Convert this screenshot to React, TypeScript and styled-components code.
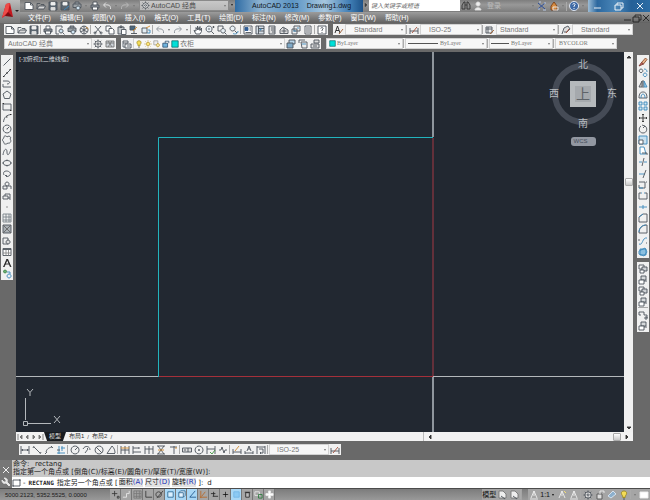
import React from "react";
import styled, { createGlobalStyle } from "styled-components";

const K = "#4d545b";
const B = "#3b88bb";
const O = "#d08a2c";
const L = "#e8e8e8";

type Stroke = [d: string, stroke?: string, fill?: string];

/* Every glyph is drawn on a 10 x 10 grid. */
const glyphs: Record<string, Stroke[]> = {
  new: [["M1 1.5H6.5L9 4V8.5H1Z", K, "#fff"], ["M6.5 1.5V4H9", K]],
  open: [["M1 8V2.5H4L5 3.5H8V5", K], ["M1 8L3 5H9.5L8 8Z", K, "#d8d8d8"]],
  save: [["M1 1H9V9H1Z", K, "#5c6670"], ["M3 1.5H7V4H3Z", "#eee", "#eee"], ["M3 6.5H7V9H3Z", "#ddd", "#ddd"]],
  saveas: [["M1 1H9V9H1Z", K, "#5c6670"], ["M3 1.5H7V4H3Z", "#eee", "#eee"], ["M4 9L9 5", B]],
  print: [["M3 4V1H7V4", K, "#fff"], ["M1 4H9V7H1Z", K, "#8b9198"], ["M2.5 6H7.5V9H2.5Z", K, "#fff"]],
  preview: [["M7 3V1H1V9H4", K], ["M6 4a2 2 0 1 0 .1 0M7.5 7.5L9.5 9.5", K, "#cfe3f0"]],
  publish: [["M3 3V1H7V3M1 3H9V6.5H1Z", K, "#9aa0a5"], ["M6 5a2 2 0 1 0 .1 0", K, "#cfe3f0"]],
  globe: [["M5 1a4 4 0 1 0 .1 0", K, "#e5e5e5"], ["M5 1V9M2 3L8 7M8 3L2 7", K], ["M7 2L9.5 4", O]],
  cut: [["M2 1L8 8M8 1L2 8", K], ["M2 7a1 1 0 1 0 .1 0M8 7a1 1 0 1 0 .1 0", K]],
  copy: [["M1 1H5L6 2V6H1Z", K, "#fff"], ["M4 3.5H7.5L9 5V9H4Z", K, "#fff"]],
  paste: [["M1 2H7V9H1Z", K, "#c4c8cc"], ["M3 1H5V2.5H3Z", K], ["M4.5 4.5H9V9.5H4.5Z", K, "#fff"]],
  match: [["M1 1H6V5H1Z", K, "#4b6880"], ["M4 6L8 2", O], ["M2 8.5H8M5 6V9", K]],
  block: [["M1 3H6V8H1Z", K, "#e4eef5"], ["M6 8H9V5H7", B], ["M5 3L9 1", O]],
  undo: [["M8.5 8C9 4 6 3.5 2 4", "#8a9097"], ["M4 1.5L1.5 4L4 6.5", "#8a9097"]],
  redo: [["M1.5 8C1 4 4 3.5 8 4", "#8a9097"], ["M6 1.5L8.5 4L6 6.5", "#8a9097"]],
  undoL: [["M8.5 8C9 4 6 3.5 2 4", L], ["M4 1.5L1.5 4L4 6.5", L]],
  redoL: [["M1.5 8C1 4 4 3.5 8 4", "#bbb"], ["M6 1.5L8.5 4L6 6.5", "#bbb"]],
  pan: [["M3 9L1 5.5L3 6V2.5L4.5 5V1L6 5L7 1.5V5.5L8.5 3V6.5L7 9Z", K, "#fff"]],
  zoom: [["M4 1a3 3 0 1 0 .1 0M6.2 6.2L9 9", K, "#e9f0f5"], ["M3 4H5M7.5 2H9.5M8.5 1V3", K]],
  zoomw: [["M1 1H6V3M1 1V6H3", K], ["M6 3.5a2.3 2.3 0 1 0 .1 0M7.7 7.7L9.5 9.5", K, "#e9f0f5"]],
  zoomp: [["M3.5 1a2.5 2.5 0 1 0 .1 0M5.5 5.5L8 8", K, "#e9f0f5"], ["M9 6C9 9 6 9.5 4 8.5", B]],
  props: [["M1 1H9V9H1Z", K, "#fff"], ["M2 2.5H5V5.5H2Z", "#315d95", "#315d95"], ["M6.5 3H8M6.5 5H8M2.5 7.5H8", K]],
  design: [["M1 1H9V9H1ZM3.5 1V9M3.5 3.5H9M3.5 6H9", K, "#d5dde4"], ["M5 4H6V5H5Z", B]],
  palette: [["M2 1H8V9H2Z", K, "#ddd"], ["M4 3H8M4 5H8M5 7H8", K]],
  sheet: [["M1 5L4 2L9 5V8.5H1Z", K, "#ddd"], ["M2.5 6H7.5M5 3V8", K]],
  markup: [["M3 1H9V6H3ZM1 4H6V9H1Z", K, "#eee"], ["M2 6H5M6 3H8", B]],
  calc: [["M2 1H8V9H2Z", K, "#fff"], ["M3 3H7M3 5H7M3 7H7", K]],
  help: [["M1 1H9V9H1Z", K, "#fff"], ["M3.7 3.5C4 2 6.8 2.5 6 4L5 5V6M5 7V8", K]],
  textstyle: [["M1 8L3.5 1L6 8M2 5.5H5", "#222"], ["M5 9L9 4", "#99582c"]],
  dimstyle: [["M1 3V9M9 3V9M1 6H9", K], ["M3 8L8 2", "#a54d37"]],
  tablestyle: [["M1 2H7V8H1ZM1 4H7M3 2V8", K, "#eee"], ["M5 9L9 5", "#a5602d"]],
  leader: [["M1 9L3 3L7 1L9 4L6 7H3", K, "#ddd"], ["M5 8L8 4", "#a54d37"]],
  gear: [["M5 2a3 3 0 1 0 .1 0", K, "#ddd"], ["M5 4a1 1 0 1 0 .1 0M5 .5V2M5 8V9.5M.5 5H2M8 5H9.5M1.8 1.8L3 3M7 7L8.2 8.2M1.8 8.2L3 7M7 3L8.2 1.8", K]],
  space: [["M1 2H9V8H1Z", "#777", "#ccd2d8"], ["M1 4H9M3 2L7 8M7 2L3 8", "#777"]],
  layers: [["M1 2H6V4H1ZM3 5H9V9H3Z", K, "#eee"], ["M1 4V8H3M5 7H8", "#56616b"]],
  bulb: [["M5 1C1.5 1 2 4.5 3.8 6V7.5H6.2V6C8 4.5 8.5 1 5 1Z", "#9c8a24", "#f4dc56"], ["M4 9H6", K]],
  sun: [["M5 3a2 2 0 1 0 .1 0", "#b48f20", "#ffe97a"], ["M5 .5V2M5 8V9.5M.5 5H2M8 5H9.5M2 2L3 3M7 7L8 8M2 8L3 7M7 3L8 2", "#b48f20"]],
  vpfreeze: [["M1 1H6V6H1Z", "#999", "#eee"], ["M6 4.5a2 2 0 1 0 .1 0", "#b48f20", "#f6e8a8"]],
  lock: [["M1 4H7V9H1Z", "#246", "#6fb3dd"], ["M4 4V1.5H8.5V4", "#246"]],
  swatch: [["M1 1H9V9H1Z", "#075f5f", "#00e0d8"]],
  stack: [["M3 1H9V5H3Z", K, "#b7d3e8"], ["M1 4L7 4V9H1Z", K, "#7fa9c7"]],
  layerprev: [["M3 3H9V9H4Z", K, "#eee"], ["M7 1H1V4", K], ["M4 5H8", B]],
  layerstate: [["M4 1H9V4H4ZM1 5H9V9H1Z", K, "#ddd"], ["M3 7H7", K]],
  line: [["M1.5 8.5L8.5 1.5", K]],
  xline: [["M1 9L9 1", K], ["M4 5H6M1 8.5H2.5M7.5 1.5H9", "#222"]],
  pline: [["M1 2H5C9 2 8 5 5 5M1 8H9M1 5V8", K]],
  polygon: [["M5 1L9 4L7.5 8.5H2.5L1 4Z", K]],
  rect: [["M1 2H9V8H1Z", K], ["M.5 1.5H2M8 8.5H9.5", "#222"]],
  arc: [["M1.5 9C2 4 5 2 9 1.5", K], ["M4 4H5.5M8 1.5H9.5", "#222"]],
  circle: [["M5 1a4 4 0 1 0 .1 0", K], ["M5 5L7 3M4.5 5H5.5", K]],
  cloud: [["M2 3C1 1 4 0 5 2C7 0 10 2 8 4C10 6 8 9 6 8C4 10 1 9 2 7C0 6 0 4 2 3Z", K]],
  spline: [["M1 8C2 1 5 1 5 5S7 9 9 2", K]],
  ellipse: [["M5 2.5a4 2.5 0 1 0 .1 0", K], ["M5 1.5V3M5 7V8.5M.5 5H2M8 5H9.5", K]],
  earc: [["M2 6C0 2 5 1 7.5 3C10 5 7 8 4 7.5M3 6.5H5", K]],
  insert: [["M1 6H5V9H1Z", K], ["M5 2a2 2 0 1 0 .1 0M6 6H9V9", K]],
  mkblock: [["M1 5H6V8H1Z", K], ["M3 5V3H8V7H6M7 8H9", K]],
  point: [["M4.5 5H5.5", "#222"]],
  hatch: [["M1 1H9V9H1ZM1 4H9M1 7H9M4 1V9M7 1V9", "#7b838a"]],
  gradient: [["M1 1H9V9H1Z", K, "#aab0b5"], ["M1 1L9 9M9 1L1 9", "#666"]],
  region: [["M1 2H6V8H1Z", K], ["M6 4a2 2 0 1 0 .1 0", K, "#ddd"]],
  table: [["M1 1.5H9V8.5H1Z", K, "#fff"], ["M1 6H9M4 3V8.5M6.5 3V8.5", "#888"], ["M1 2.5H9", K]],
  atext: [["M1.5 9L5 1L8.5 9M3 6H7", "#222"], ["M2 9L5.5 1L9 9", "#222"]],
  addsel: [["M3 1a1.5 1.5 0 1 0 .1 0", "#377f3f", "#6db174"], ["M7 5a2 2 0 1 0 .1 0M5 3H8V5", B]],
  erase: [["M3.5 5.5L7.5 1L9 2.5L5.5 7Z", "#8c5030", "#e9b48e"], ["M1 9L3.5 5.5L5.5 7Z", "#7a3b35", "#d46b60"]],
  dup: [["M3 1a1.8 1.8 0 1 0 .1 0", K], ["M7 5a1.8 1.8 0 1 0 .1 0M6 1C8 1 9 2 9 4", B]],
  mirror: [["M4 2V8H1Z", K, "#ccc"], ["M6 2V8H9Z", B, "#9dcbe8"], ["M5 1V9", K]],
  offset: [["M1 8C1 3 3 2 5 2S9 3 9 8Z", K], ["M3 8C3 5 4 4 5 4S7 5 7 8", B]],
  array: [["M1 1H4V4H1ZM6 1H9V4H6ZM1 6H4V9H1ZM6 6H9V9H6Z", B, "#d4e7f3"]],
  move: [["M5 1V9M1 5H9", "#333"], ["M4 2L5 1L6 2M4 8L5 9L6 8M2 4L1 5L2 6M8 4L9 5L8 6", "#333"]],
  rotate: [["M3 2C0 4 1 9 5 9S10 4 7 2", K], ["M4 1L7 2L5 4", K]],
  scale: [["M1 1H9V9H1Z", B, "#c7e0f0"], ["M1 5H5V9H1Z", K, "#fff"]],
  stretch: [["M2 1H6L8 8H2Z", B, "#fff"], ["M4 7H9V9", K]],
  trim: [["M1 5H4M6 5H9", B], ["M6 1L4 9", K]],
  extend: [["M1 5H7", B], ["M8 1L5 9", K]],
  brk: [["M1 2H7V8H1V5M8 2H9", K], ["M1 8H5", B]],
  brk2: [["M3 2H1V8H9V2H7", K], ["M3 2H4M6 2H7", B]],
  join: [["M1 5H9M5 3V7", B]],
  chamfer: [["M1 9V4L5 1H9V9Z", K], ["M1 4L5 1", B]],
  fillet: [["M1 9C1 4 4 1 9 1V9Z", K], ["M1 8C1 4 4 1 8 1", B]],
  blend: [["M1 8C5 10 4 1 9 2", B], ["M1 3V5M8 7H9", K]],
  explode: [["M2 2H8V8H2Z", B, "#8cc0e0"], ["M1 7L6 9L9 5L7 1L1 4Z", B]],
  order: [["M1 1H6V5H1Z", K, "#f4f4f4"], ["M4 3H9V7H4Z", K, "#cfd2d5"], ["M2 6H6V9H2Z", K, "#fff"]],
  order2: [["M3 1H8V5H3Z", K, "#d6d9db"], ["M1 5H6V9H1Z", K, "#fff"], ["M6 6H9", K]],
  annofront: [["M1 2H6V5H9V8M1 2V5H3", K], ["M7 7H9V9H7Z", K]],
  hlin: [["M1 1V9M9 1V9M1 5H9M2.5 4V6M7.5 4V6", K]],
  align: [["M2 1L1 3M9 7L8 9M2 2L8 8", K]],
  arcl: [["M1 9L3 7M7 1L9 3M2 7C3 4 4 3 8 2", K]],
  ord: [["M1 8H9M3 1V9M5 3H9M6 1V6", B], ["M1 5H4", K]],
  radius: [["M5 1a4 4 0 1 0 .1 0M5 5L8 2", K]],
  jog: [["M1 4C3 0 8 1 8 5M3 8L6 4L5 3", K]],
  diam: [["M5 1a4 4 0 1 0 .1 0M2 2L8 8", K]],
  angle: [["M9 8.5H1L6 1C8 3 9 5 9 8", K]],
  quick: [["M1 1V9M9 1V9M1 5H9M5 1V9", K], ["M1 3H9", O]],
  base: [["M1 1V9M1 3H7M1 7H9M7 2V4", K]],
  cont: [["M1 1V9M5 1V9M9 1V9M1 4H9", K]],
  dspace: [["M1 1H9M1 9H9M2 1L8 9M8 1L2 9", K], ["M2 5H8", O]],
  dbreak: [["M2 2H9M6 1V9", K], ["M7 3H9", O]],
  tol: [["M.5 3H9.5V7H.5ZM6 3V7", K, "#ddd"], ["M2 5H4", K]],
  center: [["M5 1a4 4 0 1 0 .1 0M5 4V6M4 5H6", K]],
  inspect: [["M1 1V9M9 1V9M1 4H9", K], ["M4 7L6 9L9 5", "#3e963e"]],
  jogl: [["M1 5H3L4 2L6 8L7 5H9", K]],
  dimedit: [["M1 4V9M9 4V9M1 7H9", K], ["M3 6L7 1", O]],
  dimtext: [["M1 6V9M9 6V9M1 8H9M3 6L5 1L7 6M4 4H6", K]],
  update: [["M1 1V9M9 1V9M1 2H9", K], ["M3 4H7V8H4M5 7L4 8L5 9", K]],
  binoc: [["M1 8V4L3 1H4V8ZM6 8V1H7L9 4V8ZM4 4H6", "#333", "#888"]],
  person: [["M5 1a2 2 0 1 0 .1 0M2 9C2 6 8 6 8 9Z", "#ddd", "#eee"]],
  exchange: [["M1 2L8 8M8 2L1 8", "#23489a"], ["M2 1H4M6 9H9M1 8H3M7 2H9", "#bcd0ef"]],
  apps: [["M2 9V5L5 1L8 5V9Z", "#7a3f16", "#d58a3f"], ["M4 6H9V9H4Z", "#eee"]],
  qmark: [["M5 .5a4.5 4.5 0 1 0 .1 0", "#eef3fa", "#3f6aa5"], ["M3.7 3.5C4 2 6.8 2.5 6 4L5 5V6M5 7V8", "#fff"]],
  min: [["M1 7H8", "#fff"]],
  restore: [["M3 4V2H9V7H7M1 4H7V9H1Z", "#fff"]],
  close: [["M2 2L8 8M8 2L2 8", "#fff"]],
  minD: [["M1 7H8", "#222"]],
  restoreD: [["M3 4V2H9V7H7M1 4H7V9H1Z", "#222"]],
  closeD: [["M2 2L8 8M8 2L2 8", "#222"]],
  wrench: [["M3 1L5 3V5H3L1 3C1 6 3 7 5 6L8 9L9 8L6 5C7 3 6 1 3 1Z", L, L]],
  cmd: [["M1 2H8V8H1Z", K], ["M8 1V3M1 7V9", K]],
  snap: [["M1 4H7M4 1V7M7 7H9V9H7Z", "#333"]],
  grid: [["M1 1H9V9H1ZM1 4H9M1 7H9M4 1V9M7 1V9", "#777"]],
  ortho: [["M2 1V8H9", "#333"]],
  step: [["M1 8H5V4H8V1", "#eee"]],
  polar: [["M4 2a3 3 0 1 0 .1 0M2 9L9 1", "#333"]],
  box: [["M2 2H8V8H2Z", "#235f8b", "#d9efff"]],
  cube: [["M2 3H7V8H2ZM2 3L4 1H9V6L7 8", "#235f8b", "#e6f4ff"]],
  ang: [["M8 1L2 8H9", "#174f86"]],
  dyn: [["M1 8H9M3 7L7 2M2 1V9", "#b96320"]],
  plus: [["M5 2V8M2 5H8", "#222"], ["M4 5H6", "#111"]],
  thick: [["M1 4H6M3 7H9M4 2V7", "#222"]],
  fill: [["M2 2H8V8H2Z", "#6fb4e4", "#8ccaf4"]],
  white: [["M4 1H6V4H9V6H6V9H4V6H1V4H4Z", "#eee", "#fff"]],
  qp: [["M3 3H7V8H3ZM2 2.5H8", "#222", "#bbb"]],
  cyc: [["M1 2H6V6H1Z", "#eee"], ["M5 5H9V9H5Z", "#257838"]],
  anno: [["M2 8L5 1L8 8M5 1V6M1 9H9", "#eee"]],
  annoy: [["M2 8L5 1L8 8M5 1V6", "#eee"], ["M7 1L9 3", "#ffe36e"]],
  sheetL: [["M2 1H6L9 4V8H2Z", "#777", "#eee"], ["M4 6L8 9", K]],
  lockL: [["M2 4H7V9H2Z", "#555", "#ddd"], ["M5 4V1H9V3", "#eee"]],
  hw: [["M1 6L6 1L9 4L4 8Z", "#dbe8f4", "#8db0cd"]],
  clean: [["M1 2H9V8H1Z", "#eee", "#fff"]],
  up: [["M3 6L5 4L7 6Z", "#333", "#333"]],
  down: [["M3 4L5 6L7 4Z", "#333", "#333"]],
  left: [["M6 3L4 5L6 7Z", "#333", "#333"]],
  right: [["M4 3L6 5L4 7Z", "#333", "#333"]],
  prev: [["M6 3L4 5L6 7Z", "#777", "#777"]],
  next: [["M4 3L6 5L4 7Z", "#777", "#777"]],
  first: [["M3 2V8M7 3L5 5L7 7Z", "#777", "#777"]],
  last: [["M7 2V8M3 3L5 5L3 7Z", "#777", "#777"]],
};

const Svg = styled.svg<{ $s?: number }>`
  display: block;
  flex: none;
  width: ${(p) => p.$s ?? 10}px;
  height: ${(p) => p.$s ?? 10}px;
`;

const Icon = ({ n, s }: { n: string; s?: number }) => (
  <Svg $s={s} viewBox="0 0 10 10" aria-hidden="true">
    {glyphs[n].map(([d, stroke, fill], i) => (
      <path key={i} d={d} stroke={stroke ?? K} fill={fill ?? "none"} strokeWidth={0.9} />
    ))}
  </Svg>
);

const Global = createGlobalStyle`
  *, *::before, *::after { box-sizing: border-box; }
  body { margin: 0; background: #696969; }
  button, select, input { font: inherit; color: inherit; border: 0; padding: 0; margin: 0; background: none; border-radius: 0; }
  select { appearance: none; outline: none; text-overflow: clip; }
`;

const Window = styled.div`
  display: flex;
  flex-direction: column;
  min-height: 100vh;
  overflow: hidden;
  background: #696969;
  color: #333;
  font: 7px/10px "Liberation Sans", "Noto Sans CJK SC", sans-serif;
`;

const Header = styled.header`
  display: grid;
  grid-template-columns: 20px 1fr;
  background: #777;
`;

const AppButton = styled.button`
  display: flex;
  align-items: center;
  justify-content: center;
  background: linear-gradient(#bcbcbc, #777);
`;

const TitleBar = styled.div`
  display: flex;
  align-items: stretch;
  height: 12px;
  background: linear-gradient(#7e7e7e, #989898 40%, #7c7c7c);
`;

const QuickAccess = styled.div`
  display: flex;
  align-items: center;
  width: 119px;
  padding-left: 3px;
`;

const ToolButton = styled.button<{ $w?: number; $h?: number; $on?: boolean }>`
  display: flex;
  flex: none;
  align-items: center;
  justify-content: center;
  width: ${(p) => p.$w ?? 12}px;
  height: ${(p) => p.$h ?? 11}px;
  background: ${(p) => (p.$on ? "#a9d7f5" : "transparent")};
`;

const Caret = styled.span<{ $c?: string }>`
  flex: none;
  width: 0;
  height: 0;
  margin: 0 2px;
  border: 1px solid transparent;
  border-top: 2px solid ${(p) => p.$c ?? "#777"};
  border-bottom: 0;
`;

const CaretButton = styled.button`
  display: flex;
  flex: none;
  justify-content: center;
  align-items: center;
  width: 6px;
  height: 10px;
`;

const Combo = styled.div<{ $w: number; $pad?: number; $dark?: boolean }>`
  display: flex;
  flex: none;
  align-items: center;
  width: ${(p) => p.$w}px;
  height: 11px;
  padding-left: ${(p) => p.$pad ?? 3}px;
  gap: 1px;
  overflow: hidden;
  border: 1px solid ${(p) => (p.$dark ? "#8a8a8a" : "#d2d2d2")};
  background: ${(p) => (p.$dark ? "linear-gradient(#c8c8c8, #b8b8b8)" : "#f7f7f7")};
  color: ${(p) => (p.$dark ? "#4c4c4c" : "#777")};
`;

const Select = styled.select<{ $serif?: boolean }>`
  flex: 1;
  min-width: 0;
  height: 9px;
  line-height: 9px;
  ${(p) => p.$serif && `font-family: "Liberation Serif", serif; font-size: 6px;`}
`;

const LineSample = styled.span<{ $w: number }>`
  flex: none;
  width: ${(p) => p.$w}px;
  height: 1px;
  margin-right: 1px;
  background: #555;
`;

const WindowTitle = styled.h1`
  display: flex;
  align-items: center;
  gap: 8px;
  width: 128px;
  margin: 0;
  padding-left: 17px;
  color: #10151c;
  font: 7px/12px "Liberation Sans", sans-serif;
  white-space: nowrap;
  background: linear-gradient(90deg, #2f6ca4, #8fb4d2 20%, #5b94c4 45%, #a6c6de 70%, #3f7db4 90%, #1d5288);
`;

const Search = styled.input`
  width: 91px;
  height: 11px;
  padding: 0 2px;
  background: #fff;
  font-size: 6px;
  font-style: italic;
  &::placeholder { color: #666; opacity: 1; }
`;

const InfoTools = styled.div`
  display: flex;
  flex: 1;
  align-items: center;
  justify-content: space-between;
  padding-right: 2px;
`;

const Cluster = styled.div`
  display: flex;
  align-items: center;
`;

const Faint = styled.button`
  padding-left: 3px;
  color: #bbb;
  line-height: 10px;
`;

const WindowButtons = styled.div`
  display: flex;
  align-items: center;
  justify-content: space-around;
  width: 62px;
  background: linear-gradient(90deg, #9dbdd6, #2c689f 15%, #4a86b8 45%, #256097 70%, #2b6ca5);
`;

const MenuBar = styled.nav`
  display: flex;
  align-items: center;
  gap: 9px;
  height: 11px;
  padding-left: 8px;
  background: linear-gradient(#9c9c9c, #626262);
  color: #fff;
`;

const MenuItem = styled.button`
  flex: none;
  line-height: 10px;
  white-space: nowrap;
`;

const DocButtons = styled.div`
  display: flex;
  gap: 1px;
  margin-left: auto;
`;

const ToolRow = styled.div`
  display: flex;
  gap: 5px;
  padding: 1px 0 2px 4px;
`;

const Strip = styled.div`
  display: flex;
  flex: none;
  align-items: center;
  height: 11px;
  background: #f1f1f1;
`;

const Sep = styled.span`
  flex: none;
  width: 2px;
  height: 9px;
  border-left: 1px solid #aaa;
`;

const Main = styled.main`
  display: grid;
  grid-template-columns: 13px minmax(0, 1fr) 14px;
  flex: 1;
  column-gap: 3px;
  padding-top: 1px;
`;

const Rail = styled.div`
  display: flex;
  flex-direction: column;
  align-items: flex-start;
  gap: 4px;
  padding: 3px 1px 0;
`;

const ToolColumn = styled.div`
  display: flex;
  flex-direction: column;
  align-items: center;
  width: 12px;
  padding: 1px 0;
  background: #f0f0f0;
`;

const ColumnGap = styled.span<{ $line?: boolean }>`
  width: 10px;
  height: ${(p) => (p.$line ? 2 : 1)}px;
  border-top: ${(p) => (p.$line ? "1px solid #aaa" : "0")};
`;

const Viewport = styled.section`
  display: grid;
  grid-template-columns: minmax(0, 1fr) 9px;
  grid-template-rows: 1fr 9px;
`;

const Canvas = styled.div`
  position: relative;
  overflow: hidden;
  background: #222831;
`;

const Drawing = styled.svg`
  position: absolute;
  inset: 0;
  width: 100%;
  height: 100%;
`;

const ViewLabel = styled.div`
  position: absolute;
  top: 2px;
  left: 3px;
  color: #d5d8dc;
  font: 6px/10px "Noto Sans", "Noto Sans CJK SC", sans-serif;
`;

const Cube = styled.div`
  position: absolute;
  top: 4px;
  right: 5px;
  width: 72px;
  display: flex;
  flex-direction: column;
  align-items: center;
  gap: 5px;
`;

const CubeSvg = styled.svg`
  display: block;
  width: 72px;
  height: 76px;
  font: 10px "Noto Sans CJK SC", sans-serif;
`;

const WcsButton = styled.button`
  width: 25px;
  height: 9px;
  padding-left: 3px;
  border-radius: 3px;
  background: #9297a1;
  color: #454d5b;
  font: 6px/9px "Liberation Sans", sans-serif;
  text-align: left;
`;

const ScrollV = styled.div`
  display: flex;
  flex-direction: column;
  align-items: center;
  justify-content: space-between;
  background: #f0f0f0;
`;

const ScrollH = styled.div`
  display: flex;
  align-items: center;
  width: 34%;
  border-left: 1px solid #bbb;
`;

const Thumb = styled.span`
  width: 8px;
  height: 8px;
  border: 1px solid #aaa;
  border-radius: 1px;
  background: linear-gradient(#fff, #c8c8c8);
`;

const Spring = styled.span<{ $g?: number }>`
  flex: ${(p) => p.$g ?? 1};
`;

const BottomBar = styled.div`
  grid-column: 1 / -1;
  display: flex;
  justify-content: space-between;
  background: #f2f2f2;
`;

const LayoutTabs = styled.div`
  display: flex;
  align-items: center;
  font-size: 6px;
`;

const LayoutTab = styled.button<{ $on?: boolean }>`
  height: 9px;
  padding: 0 ${(p) => (p.$on ? 5 : 3)}px;
  line-height: 9px;
  color: ${(p) => (p.$on ? "#ddd" : "#333")};
  background: ${(p) => (p.$on ? "#181b1f" : "transparent")};
  clip-path: ${(p) => (p.$on ? "polygon(0 0, 100% 0, 86% 100%, 14% 100%)" : "none")};
`;

const Slash = styled.span`
  color: #555;
`;

const DimRow = styled.div`
  display: flex;
  padding: 3px 0 5px 19px;
`;

const Command = styled.section`
  display: grid;
  grid-template-columns: 12px 1fr;
  background: #c8c8c8;
`;

const CommandSide = styled.div`
  display: flex;
  flex-direction: column;
  align-items: center;
  justify-content: space-around;
  padding-top: 4px;
  background: #777;
`;

const CommandText = styled.div`
  color: #1d1d1d;
  font-family: "DejaVu Sans", "Noto Sans CJK SC", sans-serif;
  white-space: nowrap;
`;

const History = styled.div`
  height: 17px;
  padding: 0 1px;
  line-height: 8px;
`;

const Prompt = styled.label`
  display: flex;
  align-items: center;
  gap: 1px;
  height: 11px;
  background: #fff;
`;

const CommandName = styled.b`
  padding: 0 2px;
  font: bold 6px/10px "DejaVu Sans Mono", monospace;
`;

const Option = styled.button`
  margin-right: 1px;
  background: #e3e3e3;
  line-height: 9px;
`;

const Key = styled.span`
  color: #2233b8;
`;

const CommandInput = styled.input`
  flex: 1;
  min-width: 0;
  padding-left: 3px;
  outline: none;
`;

const Status = styled.footer`
  display: flex;
  align-items: center;
  height: 12px;
  border-top: 1px solid #4c4c4c;
  background: linear-gradient(#7c7c7c, #999);
`;

const Coords = styled.output`
  width: 110px;
  padding-left: 5px;
  color: #1c1c1c;
  font: 6px/10px "Liberation Sans", sans-serif;
  white-space: nowrap;
`;

const StatusGroup = styled.div`
  display: flex;
  align-items: center;
  background: #a5a5a5;
  color: #111;
`;

const StatusButton = styled(ToolButton)`
  border-right: 1px solid #777;
`;

const Tools = ({ names, w, h }: { names: string[]; w?: number; h?: number }) => (
  <>
    {names.map((n, i) =>
      n === "|" ? (
        <Sep key={i} />
      ) : n === "v" ? (
        <CaretButton key={i} aria-label="More"><Caret /></CaretButton>
      ) : (
        <ToolButton key={i} $w={w} $h={h} aria-label={n}><Icon n={n} /></ToolButton>
      )
    )}
  </>
);

const Column = ({ names }: { names: string[] }) => (
  <ToolColumn>
    {names.map((n, i) =>
      n === "." || n === "|" ? (
        <ColumnGap key={i} $line={n === "|"} />
      ) : (
        <ToolButton key={i} $h={11} aria-label={n}><Icon n={n} /></ToolButton>
      )
    )}
  </ToolColumn>
);

type PickProps = { label: string; value: string; w: number; pad?: number; serif?: boolean; dark?: boolean; children?: React.ReactNode };

const Pick = ({ label, value, w, pad, serif, dark, children }: PickProps) => (
  <Combo $w={w} $pad={pad} $dark={dark}>
    {children}
    <Select aria-label={label} $serif={serif}><option>{value}</option></Select>
    <Caret />
  </Combo>
);

const list = (s: string) => s.split(" ");

const menus = ["文件(F)", "编辑(E)", "视图(V)", "插入(I)", "格式(O)", "工具(T)", "绘图(D)", "标注(N)", "修改(M)", "参数(P)", "窗口(W)", "帮助(H)"];
const standard = list("new open save | print preview publish globe | cut copy paste match block | undo v redo v | pan zoom zoomw zoomp | props design palette sheet markup calc | help");
const drawTools = list("line xline pline polygon . rect arc circle cloud . spline ellipse earc insert mkblock point hatch gradient . region table atext addsel");
const modifyTools = list("erase dup mirror offset array . move rotate scale stretch trim . extend brk brk2 join chamfer fillet . blend explode");
const orderTools = list("order order2 order order2 | annofront order2");
const dimTools = list("hlin align arcl ord | radius jog diam angle | quick base cont dspace dbreak | tol center inspect jogl | dimedit dimtext update |");
const modes = list("snap step grid ortho polar box cube ang dyn thick plus fill qp cyc white");
const modesOn = [5, 6, 7, 11];
const options = [["面积", "A"], ["尺寸", "D"], ["旋转", "R"]];

export default function App() {
  return (
    <Window>
      <Global />
      <Header>
        <AppButton aria-label="Application menu">
          <svg width="20" height="22" viewBox="0 0 20 22" aria-hidden="true">
            <path d="M2 17L6 3L10 2L13 16L9 13L5 15Z" fill="#c5161d" />
            <path d="M6 3L10 2L8 11L2 17Z" fill="#ee4b48" />
            <path d="M8 11L13 16L5 15Z" fill="#7d0c12" />
            <path d="M15 9H19L17 11Z" fill="#222" />
          </svg>
        </AppButton>
        <div>
          <TitleBar>
            <QuickAccess>
              <Tools names={list("new open save saveas publish v")} />
              <Tools names={["print"]} />
              <Tools names={list("undoL v redoL v")} />
            </QuickAccess>
            <Pick label="Workspace" value="AutoCAD 经典" w={90} pad={1} dark><Icon n="gear" s={9} /></Pick>
            <CaretButton aria-label="Customize"><Caret $c="#222" /></CaretButton>
            <WindowTitle><span>AutoCAD 2013</span><span>Drawing1.dwg</span></WindowTitle>
            <CaretButton aria-label="Expand search"><Icon n="right" s={8} /></CaretButton>
            <Search aria-label="Search" placeholder="键入关键字或短语" />
            <InfoTools>
              <Cluster><Tools names={["binoc", "person"]} /><Faint>登录</Faint></Cluster>
              <Cluster><Tools names={list("v exchange apps v")} /><Sep /><Tools names={["qmark", "v"]} /></Cluster>
            </InfoTools>
            <WindowButtons><Tools names={["min", "restore", "close"]} /></WindowButtons>
          </TitleBar>
          <MenuBar>
            {menus.map((m) => <MenuItem key={m}>{m}</MenuItem>)}
            <DocButtons><Tools names={["minD", "restoreD", "closeD"]} w={8} h={10} /></DocButtons>
          </MenuBar>
        </div>
      </Header>

      <ToolRow>
        <Strip><Tools names={standard} /></Strip>
        <Strip>
          <Tools names={["textstyle"]} />
          <Pick label="Text style" value="Standard" w={61} pad={8} />
          <Tools names={["|", "dimstyle"]} />
          <Pick label="Dimension style" value="ISO-25" w={62} pad={8} />
          <Tools names={["|", "tablestyle"]} />
          <Pick label="Table style" value="Standard" w={62} />
          <Tools names={["|", "leader"]} />
          <Pick label="Leader style" value="Standard" w={61} pad={8} />
        </Strip>
      </ToolRow>
      <ToolRow>
        <Strip>
          <Pick label="Workspace" value="AutoCAD 经典" w={88} />
          <Tools names={["gear", "space"]} />
        </Strip>
        <Strip>
          <Tools names={["layers"]} />
          <Pick label="Layer" value="衣柜" w={152} pad={1}>
            {list("bulb sun vpfreeze lock swatch").map((n) => <Icon key={n} n={n} s={8} />)}
          </Pick>
          <Tools names={["stack", "layerprev", "layerstate"]} />
        </Strip>
        <Strip>
          <Pick label="Color" value="ByLayer" w={77} pad={2} serif><Icon n="swatch" s={7} /></Pick>
          <Sep />
          <Pick label="Linetype" value="ByLayer" w={82} serif pad={2}><LineSample $w={30} /></Pick>
          <Sep />
          <Pick label="Lineweight" value="ByLayer" w={64} pad={1} serif><LineSample $w={18} /></Pick>
          <Sep />
          <Pick label="Plot style" value="BYCOLOR" w={62} serif />
        </Strip>
      </ToolRow>

      <Main>
        <Rail><Column names={drawTools} /></Rail>
        <Viewport>
          <Canvas>
            <Drawing viewBox="0 0 608 380" preserveAspectRatio="xMinYMin slice" fill="none">
              <path d="M417 0V85" stroke="#8f969d" strokeWidth="2" />
              <path d="M417 325V380" stroke="#8f969d" strokeWidth="2" />
              <path d="M0 324.5H142M417 324.5H608" stroke="#b4b8bb" />
              <path d="M142.5 325V85.5H417" stroke="#22b3bd" />
              <path d="M417 86V324" stroke="#63303a" strokeWidth="2" />
              <path d="M143 324.5H417" stroke="#a5303a" />
              <g stroke="#b4b8bc">
                <path d="M9.5 368V346M12 371.5H35M7.5 369.5H11.5V373.5H7.5Z" />
                <path d="M11 337L14 340.5L17 337M14 340.5V344M38 364L44 371M44 364L38 371" />
              </g>
            </Drawing>
            <ViewLabel>[-][俯视][二维线框]</ViewLabel>
            <Cube>
              <CubeSvg viewBox="0 0 72 76" aria-label="View cube">
                <circle cx="36" cy="38" r="28" fill="none" stroke="#454b56" strokeWidth="6" />
                <rect x="23" y="25" width="26" height="26" fill="#b5b9bc" />
                <rect x="28" y="30" width="16" height="16" fill="#a5a9ad" />
                <g fill="#b9bdc1" textAnchor="middle">
                  <text x="36" y="12">北</text>
                  <text x="7" y="41">西</text>
                  <text x="65" y="41">东</text>
                  <text x="36" y="71">南</text>
                  <text x="36" y="43" fontSize="14" fill="#5e6368">上</text>
                </g>
              </CubeSvg>
              <WcsButton>WCS</WcsButton>
            </Cube>
          </Canvas>
          <ScrollV>
            <Tools names={["up"]} w={9} h={9} />
            <Spring $g={117} />
            <Thumb />
            <Spring $g={236} />
            <Tools names={["down"]} w={9} h={9} />
          </ScrollV>
          <BottomBar>
            <LayoutTabs>
              <Tools names={["first", "prev", "next", "last"]} w={7} h={9} />
              <LayoutTab $on>模型</LayoutTab>
              <LayoutTab>布局1</LayoutTab>
              <Slash>/</Slash>
              <LayoutTab>布局2</LayoutTab>
              <Slash>/</Slash>
            </LayoutTabs>
            <ScrollH>
              <Tools names={["left"]} h={9} />
              <Spring />
              <Thumb />
              <Tools names={["right"]} h={9} />
            </ScrollH>
          </BottomBar>
        </Viewport>
        <Rail>
          <Column names={modifyTools} />
          <Column names={orderTools} />
        </Rail>
      </Main>

      <DimRow>
        <Strip>
          <Tools names={dimTools} />
          <Pick label="Dimension style" value="ISO-25" w={60} pad={7} />
          <Tools names={["dimstyle"]} />
        </Strip>
      </DimRow>

      <Command>
        <CommandSide>
          <Tools names={["close", "wrench"]} h={10} />
        </CommandSide>
        <CommandText>
          <History>
            <div>命令: _rectang</div>
            <div>指定第一个角点或 [倒角(C)/标高(E)/圆角(F)/厚度(T)/宽度(W)]:</div>
          </History>
          <Prompt>
            <Icon n="cmd" />-
            <CommandName>RECTANG</CommandName>
            <span>指定另一个角点或 [</span>
            {options.map(([t, k]) => <Option key={k}>{t}<Key>({k})</Key></Option>)}
            <span>]:</span>
            <CommandInput aria-label="Command" defaultValue="d" />
          </Prompt>
        </CommandText>
      </Command>

      <Status>
        <Coords>5000.2123, 5352.5525, 0.0000</Coords>
        <StatusGroup>
          {modes.map((n, i) => (
            <StatusButton key={i} $w={11} $on={modesOn.includes(i)} aria-label={n} aria-pressed={modesOn.includes(i)}>
              <Icon n={n} s={9} />
            </StatusButton>
          ))}
        </StatusGroup>
        <Spring />
        <StatusGroup>
          <MenuItem>模型</MenuItem>
          <Tools names={["sheetL", "sheetL", "|"]} />
        </StatusGroup>
        <Cluster><Caret $c="transparent" /></Cluster>
        <StatusGroup>
          <Tools names={["anno"]} /><MenuItem>1:1</MenuItem><CaretButton aria-label="Scale"><Caret $c="#111" /></CaretButton>
          <Tools names={list("annoy anno | gear lockL hw bulb | v clean")} />
        </StatusGroup>
      </Status>
    </Window>
  );
}
